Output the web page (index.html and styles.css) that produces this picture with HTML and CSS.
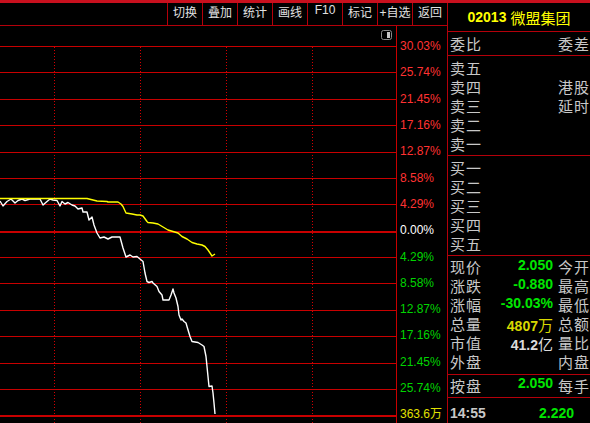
FILE: index.html
```html
<!DOCTYPE html>
<html lang="zh-CN">
<head>
  <meta charset="UTF-8" />
  <title>02013 微盟集团 分时</title>
  <link rel="stylesheet" href="styles.css">
</head>
<body>
  <div class="topbar"></div>
  <div class="screen">
    <div class="chartpane">
      <div class="toolbar">
        <span class="tool">切换</span>
        <span class="tool">叠加</span>
        <span class="tool">统计</span>
        <span class="tool">画线</span>
        <span class="tool">F10</span>
        <span class="tool">标记</span>
        <span class="tool">+自选</span>
        <span class="tool">返回</span>
      </div>
      <div class="chartrow">
        <svg class="plot" width="396" height="397" viewBox="0 0 396 397">
          <g transform="translate(0 -26)">
            <!-- panel toggle icon -->
            <rect x="381.5" y="30.5" width="10" height="9" rx="2" fill="none" stroke="#8a8a8a"/>
            <rect x="387" y="32" width="3" height="6" fill="#c8c8c8"/>

            <!-- time grid -->
            <g class="vgrid">
              <line x1="54.5" y1="47" x2="54.5" y2="423"/>
              <line x1="140.5" y1="47" x2="140.5" y2="423"/>
              <line x1="226.5" y1="47" x2="226.5" y2="423"/>
              <line x1="312.5" y1="47" x2="312.5" y2="423"/>
            </g>

            <!-- price grid -->
            <g class="hgrid">
              <line x1="0" y1="46.5" x2="396" y2="46.5"/>
              <line x1="0" y1="72.5" x2="396" y2="72.5"/>
              <line x1="0" y1="99.5" x2="396" y2="99.5"/>
              <line x1="0" y1="125.5" x2="396" y2="125.5"/>
              <line x1="0" y1="152.5" x2="396" y2="152.5"/>
              <line x1="0" y1="178.5" x2="396" y2="178.5"/>
              <line x1="0" y1="204.5" x2="396" y2="204.5"/>
              <line class="base" x1="0" y1="232" x2="396" y2="232"/>
              <line x1="0" y1="257.5" x2="396" y2="257.5"/>
              <line x1="0" y1="283.5" x2="396" y2="283.5"/>
              <line x1="0" y1="310.5" x2="396" y2="310.5"/>
              <line x1="0" y1="336.5" x2="396" y2="336.5"/>
              <line x1="0" y1="363.5" x2="396" y2="363.5"/>
              <line x1="0" y1="389.5" x2="396" y2="389.5"/>
              <line class="base" x1="0" y1="416" x2="396" y2="416"/>
            </g>

            <!-- price -->
            <polyline class="price" points="0,201 3,206 7,201.5 11,199 15,203 18,200.5 22,199 25,200.5 30,199 40,199 43,205 47,201.5 50,199 53,200 57,200.5 60,206 62,201.5 65,204 68,202.5 72,205 75,206 78,209 82,208 83,212 87,212 89,220 92,217 94,225 97,233 100,238 104,237 108,239 112,237 120,237 123,248 126,257 130,255 133,257 137,256.5 140,259 143,261.5 145,273 147,281.5 149,282.5 152,281.5 153,283 157,286.5 159,291.5 162,295 163,300 169,300 171,295 173,289 174,293 176,298 178,306.5 179,315 181,320 182,319 184,321.5 186,323 187,326.5 190,336.5 192,341.5 198,342.5 202,345 204,346.5 206,356.5 207,366.5 208,376.5 209,386.5 212,386 213,393 214,403 215,414"/>
            <!-- average -->
            <polyline class="avg" points="0,198.5 87,198.5 93,200 97,201 107,201.5 108,202 118,202 121,204 123,206.5 126,213 132,214 137,215 140,215 143,216 147,221.5 148,222.5 153,223 158,224 163,227 168,230 173,231.5 178,233 182,236.5 187,239 192,242.5 197,244 202,245 205,246.5 208,250 212,256 215,254"/>
          </g>
        </svg>
        <div class="axis">
          <span class="up">30.03%</span>
          <span class="up">25.74%</span>
          <span class="up">21.45%</span>
          <span class="up">17.16%</span>
          <span class="up">12.87%</span>
          <span class="up">8.58%</span>
          <span class="up">4.29%</span>
          <span class="flat">0.00%</span>
          <span class="down">4.29%</span>
          <span class="down">8.58%</span>
          <span class="down">12.87%</span>
          <span class="down">17.16%</span>
          <span class="down">21.45%</span>
          <span class="down">25.74%</span>
          <span class="vol">363.6万</span>
        </div>
      </div>
    </div>

    <div class="quote">
      <div class="qhead"><span class="code">02013</span><span class="name">微盟集团</span></div>

      <div class="qrow ratio"><span class="lbl">委比</span><span class="val"></span><span class="lbl2">委差</span></div>

      <div class="book">
        <div class="qrow"><span class="lbl">卖五</span><span class="val"></span><span class="lbl2"></span></div>
        <div class="qrow"><span class="lbl">卖四</span><span class="val"></span><span class="lbl2">港股</span></div>
        <div class="qrow"><span class="lbl">卖三</span><span class="val"></span><span class="lbl2">延时</span></div>
        <div class="qrow"><span class="lbl">卖二</span><span class="val"></span><span class="lbl2"></span></div>
        <div class="qrow"><span class="lbl">卖一</span><span class="val"></span><span class="lbl2"></span></div>
      </div>

      <div class="book">
        <div class="qrow"><span class="lbl">买一</span></div>
        <div class="qrow"><span class="lbl">买二</span></div>
        <div class="qrow"><span class="lbl">买三</span></div>
        <div class="qrow"><span class="lbl">买四</span></div>
        <div class="qrow"><span class="lbl">买五</span></div>
      </div>

      <div class="stats">
        <div class="qrow"><span class="lbl">现价</span><span class="val green">2.050</span><span class="lbl2">今开</span></div>
        <div class="qrow"><span class="lbl">涨跌</span><span class="val green">-0.880</span><span class="lbl2">最高</span></div>
        <div class="qrow"><span class="lbl">涨幅</span><span class="val green">-30.03%</span><span class="lbl2">最低</span></div>
        <div class="qrow"><span class="lbl">总量</span><span class="val yellow">4807<span class="unit">万</span></span><span class="lbl2">总额</span></div>
        <div class="qrow"><span class="lbl">市值</span><span class="val light">41.2<span class="unit">亿</span></span><span class="lbl2">量比</span></div>
        <div class="qrow"><span class="lbl">外盘</span><span class="val"></span><span class="lbl2">内盘</span></div>
      </div>

      <div class="qrow close"><span class="lbl">按盘</span><span class="val green">2.050</span><span class="lbl2">每手</span></div>

      <div class="tick"><span class="time">14:55</span><span class="tprice">2.220</span></div>
    </div>
  </div>
</body>
</html>
```

FILE: styles.css
```css
body {
  margin: 0;
  background: #000;
  color: #c8c8c8;
  font-family: "Noto Sans CJK SC", sans-serif;
  width: 590px; height: 423px; overflow: hidden;
}
.topbar { height: 3px; background: #c8101e; }
.screen { display: flex; height: 420px; }

/* left: toolbar + chart */
.chartpane { width: 447px; display: flex; flex-direction: column; }
.toolbar {
  height: 22px;
  border-bottom: 1px solid #b4000a;
  display: flex; justify-content: flex-end;
}
.tool {
  width: 34px;
  border-left: 1px solid #b4000a;
  text-align: center;
  line-height: 22px;
  font: 12px "Liberation Sans", "Noto Sans CJK SC", sans-serif;
  color: #e0e0e0;
}
.chartrow { display: flex; flex: 1; min-height: 0; }
.plot { flex: none; display: block; }
.vgrid line { stroke: #d40000; stroke-width: 1; stroke-dasharray: 1 2; }
.hgrid line { stroke: #c80000; stroke-width: 1; }
.hgrid .base { stroke-width: 2; }
.price, .avg { fill: none; stroke-width: 1.4; stroke-linejoin: round; }
.price { stroke: #fff; }
.avg { stroke: #ffff00; }

.axis {
  width: 47px;
  border-left: 1px solid #c80000;
  padding: 7px 0 0 3px;
  display: grid;
  grid-auto-rows: 26.3px;
  align-items: center;
  overflow: hidden;
  font: 12px/14px "Liberation Sans", "Noto Sans CJK SC", sans-serif;
}
.axis .up { color: #ff3232; }
.axis .flat { color: #fff; }
.axis .down { color: #00d400; }
.axis .vol { color: #e0e000; }

/* right: quote panel */
.quote {
  width: 142px;
  border-left: 1px solid #b4000a;
  overflow: hidden;
}
.qhead {
  height: 28px;
  border-bottom: 1px solid #b4000a;
  display: flex; align-items: center; justify-content: center; gap: 4px;
  color: #ffff00;
}
.qhead .code { font: bold 14px "Liberation Sans", sans-serif; }
.qhead .name { font-size: 15px; }

.qrow {
  display: flex;
  height: 19px; line-height: 19px;
  padding-left: 2px;
  white-space: nowrap;
}
.lbl { width: 32px; font-size: 15px; letter-spacing: 1px; }
.val {
  width: 74px;
  text-align: right;
  font: bold 14px "Liberation Sans", "Noto Sans CJK SC", sans-serif;
}
.val .unit { font: normal 15px "Noto Sans CJK SC", sans-serif; }
.lbl2 { margin-left: 5px; font-size: 15px; letter-spacing: 1px; }

.ratio { height: 23px; line-height: 23px; border-bottom: 1px solid #b4000a; }
.book { padding: 2px 0; border-bottom: 1px solid #b4000a; }
.stats { padding: 1px 0 3px; border-bottom: 1px solid #b4000a; }
.close { height: 22px; line-height: 22px; border-bottom: 1px solid #b4000a; }

.green { color: #00e600; }
.yellow { color: #d8d800; }
.light { color: #dcdcdc; }

.tick {
  display: flex;
  padding-left: 2px;
  line-height: 30px;
  font: bold 14px/30px "Liberation Sans", sans-serif;
}
.tick .time { width: 89px; color: #c8c8c8; }
.tick .tprice { color: #00e600; }
```
